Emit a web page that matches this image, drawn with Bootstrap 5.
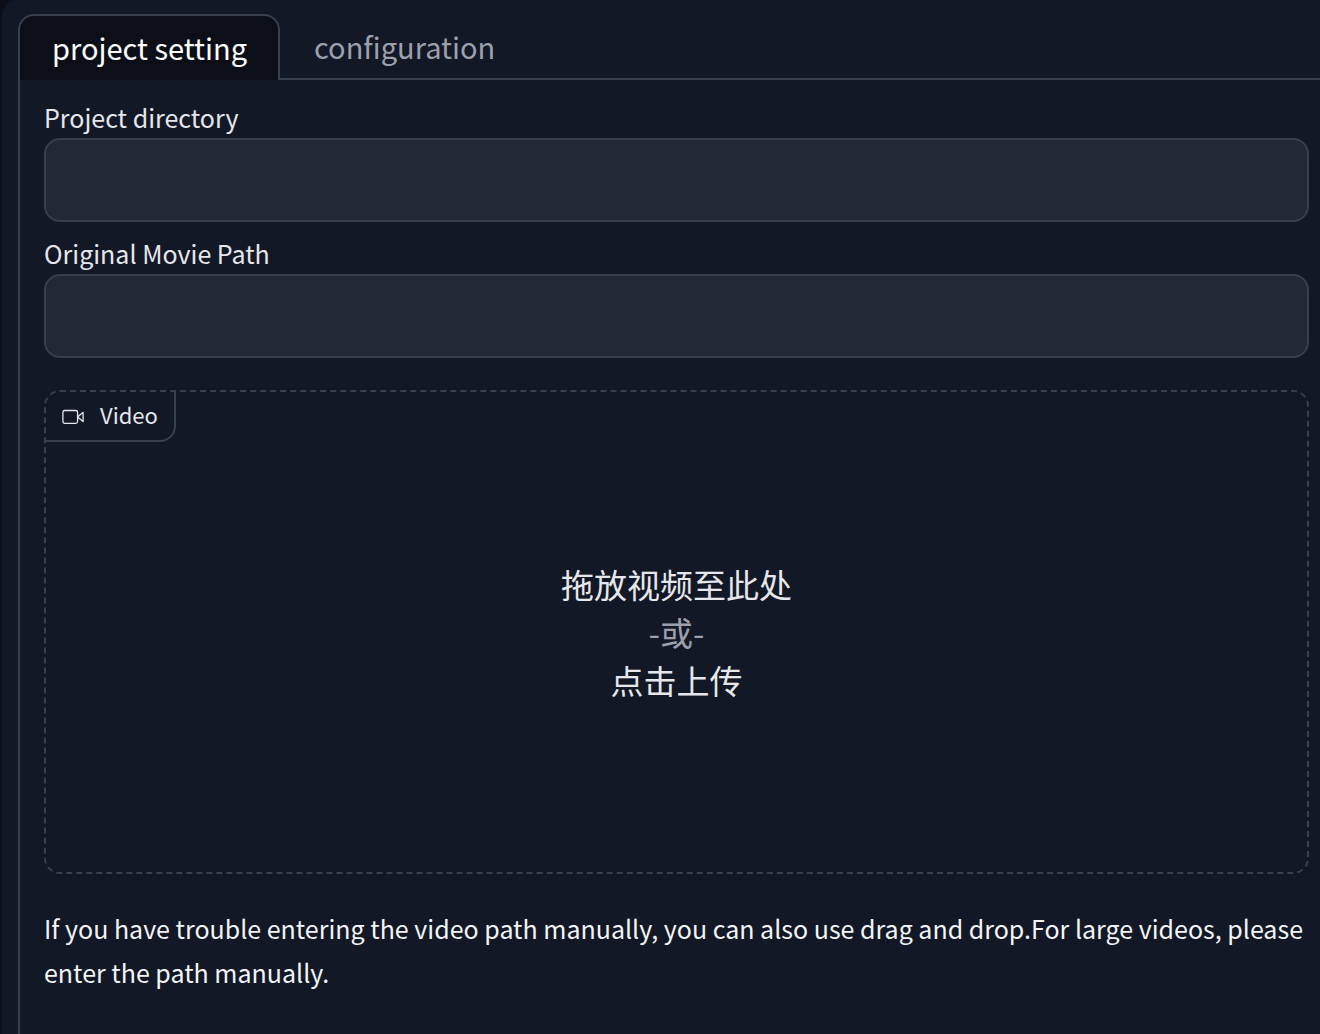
<!DOCTYPE html>
<html lang="en" data-bs-theme="dark">
<head>
<meta charset="utf-8">
<meta name="viewport" content="width=device-width, initial-scale=1">
<title>Project setting</title>
<link href="https://cdn.jsdelivr.net/npm/bootstrap@5.3.0/dist/css/bootstrap.min.css" rel="stylesheet">
<style>
  :root { --line: #383f4d; --ink: #e6e7eb; --muted: #9ca0ad; --panel: #121825; --deep: #0c0f18; }
  body { background: var(--deep); color: #f3f4f6; font-family: "Noto Sans CJK SC", "Noto Sans", sans-serif; }
  .app-shell { background: var(--panel); border-top-left-radius: 16px; margin-left: 2px; padding: 14px 0 0 16px; }
  .app-tabs { border: 0; }
  .app-tabs::after { content: ""; flex: 1; border-bottom: 2px solid var(--line); }
  .app-tabs .nav-link { height: 66px; margin: 0; padding: 0 34px; border: solid var(--line); border-width: 0 0 2px; border-radius: 0; color: var(--muted); font-size: 29px; line-height: 62px; }
  .app-tabs .nav-link.active { padding: 0 31px 4px 32px; border-width: 2px 2px 0; border-color: var(--line); border-radius: 16px 16px 0 0; background: var(--deep); color: #fff; }
  .app-panel { border-left: 2px solid var(--line); padding: 20px 11px 20px 24px; }
  .field-row { margin-bottom: 14px; }
  .field-label { display: block; color: var(--ink); font-size: 25px; line-height: 34px; padding-bottom: 4px; }
  .field-box { height: 84px; border: 2px solid var(--line); border-radius: 16px; background: #212936; padding: 20px; font-size: 25px; }
  .drop-zone { min-height: 484px; margin-top: 32px; border: 2px dashed var(--line); border-radius: 16px; background: transparent; color: var(--ink); font-size: 33px; line-height: 48px; padding: 0; }
  .drop-tag { gap: 16px; height: 50px; padding: 0 16px; border: solid var(--line); border-width: 0 2px 2px 0; border-bottom-right-radius: 16px; font-size: 22px; line-height: 44px; }
  .drop-tag-text { padding-bottom: 4px; }
  .drop-or { color: var(--muted); }
  .hint-text { margin: 32px 0 0; font-size: 25px; line-height: 44px; }
</style>
<script src="https://cdn.jsdelivr.net/npm/bootstrap@5.3.0/dist/js/bootstrap.bundle.min.js" defer></script>
</head>
<body>
<main class="app-shell min-vh-100 d-flex flex-column">
  <div class="nav nav-tabs app-tabs" role="tablist">
    <button class="nav-link active" id="tab-project" type="button" role="tab" data-bs-toggle="tab" data-bs-target="#pane-project" aria-controls="pane-project" aria-selected="true">project setting</button>
    <button class="nav-link" id="tab-config" type="button" role="tab" data-bs-toggle="tab" data-bs-target="#pane-config" aria-controls="pane-config" aria-selected="false">configuration</button>
  </div>
  <div class="tab-content app-panel flex-grow-1">
    <section class="tab-pane active" id="pane-project" role="tabpanel" aria-labelledby="tab-project">
      <div class="field-row">
        <label class="field-label" for="project-dir">Project directory</label>
        <input class="form-control field-box" id="project-dir" type="text">
      </div>
      <div>
        <label class="field-label" for="movie-path">Original Movie Path</label>
        <input class="form-control field-box" id="movie-path" type="text">
      </div>
      <button class="drop-zone position-relative d-flex flex-column align-items-center justify-content-center w-100" type="button">
        <span class="drop-tag position-absolute top-0 start-0 d-flex align-items-center">
          <svg width="22" height="22" viewBox="0 0 24 24" fill="none" stroke="currentColor" stroke-width="1.4" stroke-linecap="round" stroke-linejoin="round" aria-hidden="true"><path d="m23 8-6 5 6 5V8z"/><rect x="1" y="6" width="16" height="14" rx="2"/></svg>
          <span class="drop-tag-text">Video</span>
        </span>
        <span lang="zh">拖放视频至此处</span>
        <span class="drop-or" lang="zh">-或-</span>
        <span lang="zh">点击上传</span>
      </button>
      <p class="hint-text">If you have trouble entering the video path manually, you can also use drag and drop.For large videos, please enter the path manually.</p>
    </section>
    <section class="tab-pane" id="pane-config" role="tabpanel" aria-labelledby="tab-config"></section>
  </div>
</main>
</body>
</html>
